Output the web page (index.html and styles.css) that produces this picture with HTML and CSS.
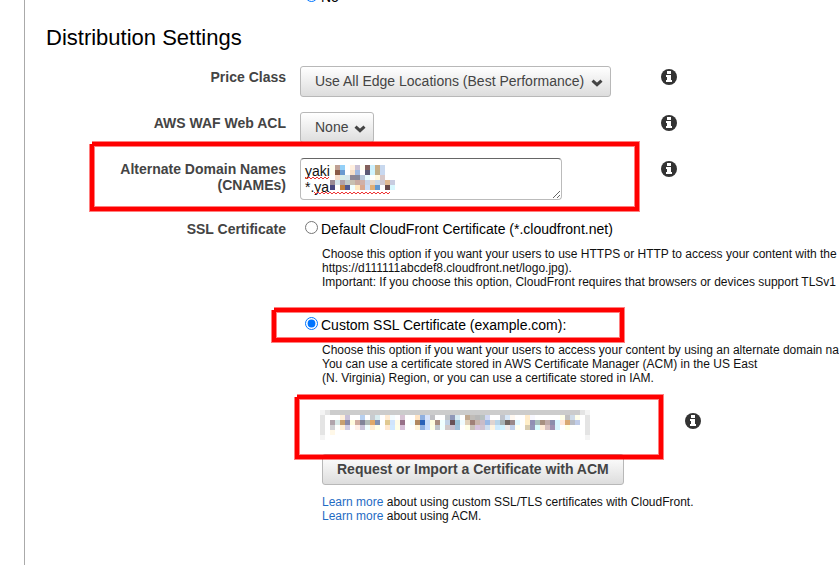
FILE: index.html
```html
<!DOCTYPE html>
<html lang="en">
<head>
  <meta charset="UTF-8">
  <meta name="viewport" content="width=device-width, initial-scale=1.0">
  <title>Distribution Settings</title>
  <link rel="stylesheet" href="styles.css">
</head>
<body>
  <svg class="sprite" aria-hidden="true">
    <symbol id="info" viewBox="0 0 16 16">
      <circle cx="8" cy="8" r="8" fill="#333"/>
      <path d="M6 2h4v3H6zM5 6h5v5h1v2H5v-2h1V8H5z" fill="#fff"/>
    </symbol>
    <symbol id="chevron" viewBox="0 0 12 8">
      <path d="M1.5 1.7L6 5.7L10.5 1.7" fill="none" stroke="#444" stroke-width="3"/>
    </symbol>
  </svg>

  <main class="panel">
    <div class="row row-cut">
      <span></span>
      <label class="option"><input type="radio" name="logging" checked> No</label>
    </div>

    <h2 class="title">Distribution Settings</h2>

    <div class="row">
      <label class="name" for="price">Price Class</label>
      <div class="field">
        <div class="dropdown">
          <select id="price"><option>Use All Edge Locations (Best Performance)</option></select>
          <svg class="chevron"><use href="#chevron"/></svg>
        </div>
        <button class="info" aria-label="About price class"><svg><use href="#info"/></svg></button>
      </div>
    </div>

    <div class="row">
      <label class="name" for="waf">AWS WAF Web ACL</label>
      <div class="field">
        <div class="dropdown">
          <select id="waf"><option>None</option></select>
          <svg class="chevron"><use href="#chevron"/></svg>
        </div>
        <button class="info" aria-label="About web ACL"><svg><use href="#info"/></svg></button>
      </div>
    </div>

    <div class="row row-names">
      <label class="name" for="cnames">Alternate Domain Names<br>(CNAMEs)</label>
      <div class="field">
        <div class="names">
          <textarea id="cnames" rows="2" spellcheck="false">yaki
*.ya</textarea>
          <svg class="mask mask-names" viewBox="0 0 90 30" aria-hidden="true">
            <g id="names-cells"></g>
            <path id="wave-top" fill="none" stroke="#e33"/>
            <path id="wave-bottom" fill="none" stroke="#e33"/>
          </svg>
        </div>
        <button class="info" aria-label="About alternate domain names"><svg><use href="#info"/></svg></button>
      </div>
      <div class="mark mark-names"></div>
    </div>

    <div class="row">
      <span class="name">SSL Certificate</span>
      <div class="choices">
        <label class="option"><input type="radio" name="ssl"> Default CloudFront Certificate (*.cloudfront.net)</label>
        <p class="help">
          Choose this option if you want your users to use HTTPS or HTTP to access your content with the<br>
          https://d111111abcdef8.cloudfront.net/logo.jpg).<br>
          Important: If you choose this option, CloudFront requires that browsers or devices support TLSv1
        </p>

        <div class="custom">
          <label class="option"><input type="radio" name="ssl" checked> Custom SSL Certificate (example.com):</label>
          <div class="mark mark-custom"></div>
        </div>
        <p class="help">
          Choose this option if you want your users to access your content by using an alternate domain name<br>
          You can use a certificate stored in AWS Certificate Manager (ACM) in the US East<br>
          (N. Virginia) Region, or you can use a certificate stored in IAM.
        </p>

        <div class="field certificate">
          <div class="cert-box">
            <select class="cert-select" aria-label="Certificate"></select>
            <svg class="mask mask-cert" viewBox="0 0 270 30" aria-hidden="true">
              <path d="M10 0h250v5H10z" fill="#ccc"/>
              <path d="M5 0h5v5H5zM0 5h5v20H0zM260 0h5v5h-5zM265 5h5v20h-5z" fill="#e4e4e4"/>
              <path d="M0 0h5v5H0zM0 25h5v5H0zM265 0h5v5h-5zM265 25h5v5h-5z" fill="#f4f4f4"/>
              <g id="cert-cells"></g>
            </svg>
          </div>
          <button class="info" aria-label="About certificates"><svg><use href="#info"/></svg></button>
          <div class="mark mark-cert"></div>
        </div>

        <button class="request">Request or Import a Certificate with ACM</button>
        <p class="help">
          <a href="#">Learn more</a> about using custom SSL/TLS certificates with CloudFront.<br>
          <a href="#">Learn more</a> about using ACM.
        </p>
      </div>
    </div>
  </main>

  <script>
    // Each string is a row of 5px cells, "-" leaves a cell empty
    const nameRows = [
      'fffff0 bfa093 94d0f8 - fff0e0 c8c0d4 fffff4 83605c cdf0ff c9ad87 c8d8ee',
      'fffff0 8a5a44 6a9ad0 - f8e0c8 a0b8e0 - 5a5a78 d0f4ff c0ae88 c8d8f0',
      '- f5dcc8 d8ece8 d8e8ec 8f8794 888898 b8c8dc e8fcff - fff8e0 d8c8c8',
      '9a8a94 d4e4ec b0a0a8 c0c8c8 c8c0b0 c8aaa0 d0b0a8 c8d4e8 e8d8c8 c8d8e8 d0c8d0 e0b890 c8cce0',
      '484880 - c08040 505890 f0ffff ffe8c0 d8a890 c8dcf8 e0b078 6098d0 - 684848 d8f8ff'
    ];
    const certRows = [
      '- - fff0dc c8c0d8 - - b8d0f0 - c8ccd0 d8ecf0 - ffecd4 f4fcff - d8c4d4 - - ffe4c4 90b0e0 d8e4fc c0c0c4 - - c0c4c8 9098b8 d8ecf4 - c0a890 c0bcb8 b8b8b8 b8c0c0 d0d8f4 - - c0c4cc d8e8f8 fff8f0 - - ffeccc f8f8ff - - - - - ffffe8 c0c0c0 d0dce8 ffffec',
      'b0a4ac d8e8e8 c8a070 8888a8 fffce0 d0aca0 808498 b0bcb8 e0a868 8090b0 - e0c890 d0e4fc fffce8 987088 - f0fcff b08860 2860b8 c8dcf8 fffce0 a88c80 f0ffff c0d0e4 685058 98c0d8 f0fcff e0d0b8 a08078 c8b4ac c8bcc8 98b8e4 e0d4d0 b8d4e8 a8b4b4 706860 988888 e0f8ff - ffeec8 9090b4 a8c0bc a89080 c0aaa8 8c8cac d8f4ff ffe8d8 d8a870 b8bcc4 c0cce8',
      'd0d0d4 - fff0d8 d0cce4 - fff0e8 c8c4d8 f0ffff ffecd0 ffffe8 - ffe8d0 d0e8ff ffffe8 d8c0d8 - - fff4d8 90b0e0 c8dcff ffffe8 c0c4cc f0ffff d0c8c8 c8c0d0 a0c0dc - ffffe8 c8c0b8 d8c4e0 d0c4d0 d0e0f0 fff4e0 d0ecff d0f4ff f0ece8 c0d0e8 fffff0 - d8ccb0 9498b8 d8ffff ffecd8 d8c0c0 a090b0 d8f4ff - ffffe4 - -',
      'fff8e8'
    ];

    function drawCells(id, rows, left, top) {
      const group = document.getElementById(id);
      rows.forEach((row, y) => {
        row.split(' ').forEach((color, x) => {
          if (color === '-') return;
          const cell = document.createElementNS('http://www.w3.org/2000/svg', 'rect');
          cell.setAttribute('x', left + x * 5);
          cell.setAttribute('y', top + y * 5);
          cell.setAttribute('width', 5);
          cell.setAttribute('height', 5);
          cell.setAttribute('fill', '#' + color);
          group.appendChild(cell);
        });
      });
    }

    function drawWave(id, from, to, y) {
      let d = 'M' + from + ' ' + y;
      for (let x = from + 2, up = true; x <= to; x += 2, up = !up) {
        d += 'L' + x + ' ' + (up ? y + 2 : y);
      }
      document.getElementById(id).setAttribute('d', d);
    }

    drawCells('names-cells', nameRows, 25, 0);
    drawCells('cert-cells', certRows, 10, 5);
    drawWave('wave-top', 0, 24, 12);
    drawWave('wave-bottom', 9, 86, 27);
  </script>
</body>
</html>
```
FILE: styles.css
```css
* {
  box-sizing: border-box;
}
body {
  margin: 0;
  background-color: #fff;
  color: #111;
  font-family: "Liberation Sans", Arial, sans-serif;
  font-size: 14px;
  line-height: 16px;
  overflow-x: hidden;
}
.sprite {
  position: absolute;
  width: 0;
  height: 0;
}
.panel {
  min-height: 100vh;
  margin-left: 24px;
  border-left: 1px solid #aaa;
  overflow: hidden;
}
.title {
  margin: 20px 0 15px 21px;
  font-size: 22px;
  font-weight: normal;
  line-height: 26px;
  color: #000;
}
.row {
  display: grid;
  grid-template-columns: 261px minmax(0, 1fr);
  column-gap: 14px;
  margin-bottom: 15px;
}
.row-cut {
  margin-top: -11px;
  margin-bottom: 0;
}
.row-names {
  position: relative;
  margin-bottom: 18px;
}
.name {
  padding-top: 3px;
  text-align: right;
  font-weight: bold;
  color: #444;
}
.field {
  display: grid;
  grid-template-columns: 361px 16px;
  align-items: start;
}
.info {
  width: 16px;
  height: 16px;
  margin-top: 3px;
  padding: 0;
  border: none;
  background: none;
  cursor: pointer;
}
.info svg {
  display: block;
  width: 16px;
  height: 16px;
}
.dropdown {
  position: relative;
  justify-self: start;
}
.dropdown select,
.request {
  display: block;
  height: 31px;
  border: 1px solid #b8b8b8;
  border-radius: 3px;
  background: linear-gradient(#fff, #ddd);
  font-family: inherit;
  font-size: 14px;
  color: #444;
}
.dropdown select {
  appearance: none;
  padding: 0 24px 2px 14px;
}
.chevron {
  position: absolute;
  top: 13px;
  right: 8px;
  width: 12px;
  height: 8px;
  pointer-events: none;
}
.names {
  position: relative;
  justify-self: start;
}
.names textarea {
  display: block;
  width: 262px;
  height: 42px;
  padding: 4px;
  border: 1px solid #bbb;
  border-top-color: #666;
  border-radius: 4px;
  font-family: inherit;
  font-size: 14px;
  line-height: 16px;
  color: #111;
  overflow: hidden;
}
.mask {
  position: absolute;
  pointer-events: none;
  shape-rendering: crispEdges;
}
.mask-names {
  top: 7px;
  left: 5px;
  width: 90px;
  height: 30px;
}
.option {
  display: flex;
  align-items: center;
  gap: 3px;
  color: #000;
}
.option input {
  width: 13px;
  height: 13px;
  margin: 0 0 3px 5px;
}
.choices {
  padding-top: 3px;
}
.help {
  margin: 10px 0 25px 22px;
  font-size: 12px;
  line-height: 14px;
  white-space: nowrap;
}
.help a {
  color: #1f6bc4;
  text-decoration: none;
}
.custom {
  position: relative;
  margin-top: 28px;
}
.certificate {
  position: relative;
  grid-template-columns: 363px 16px;
  margin: 0 0 14px 22px;
}
.cert-box {
  position: relative;
  height: 30px;
}
.cert-select {
  width: 266px;
  height: 30px;
  border: none;
  background: none;
  appearance: none;
}
.mask-cert {
  top: 0;
  left: -2px;
  width: 270px;
  height: 30px;
}
.request {
  margin-left: 22px;
  padding: 0 14px 2px;
  font-weight: bold;
  cursor: pointer;
}

/* Red highlight frames laid over the form */
.mark {
  position: absolute;
  border: 4px solid #f00;
  box-shadow: 0 0 0 1px rgba(255, 0, 0, 0.5), inset 0 0 0 1px rgba(255, 0, 0, 0.5);
  pointer-events: none;
}
.mark::before {
  content: "";
  position: absolute;
  top: -5px;
  left: -5px;
  width: 3px;
  height: 3px;
  background-color: #fff;
}
.mark-names {
  top: -16px;
  left: 65px;
  width: 549px;
  height: 69px;
}
.mark-custom {
  top: -9px;
  left: -28px;
  width: 352px;
  height: 34px;
}
.mark-cert {
  top: -15px;
  left: -27px;
  width: 368px;
  height: 64px;
}
```
